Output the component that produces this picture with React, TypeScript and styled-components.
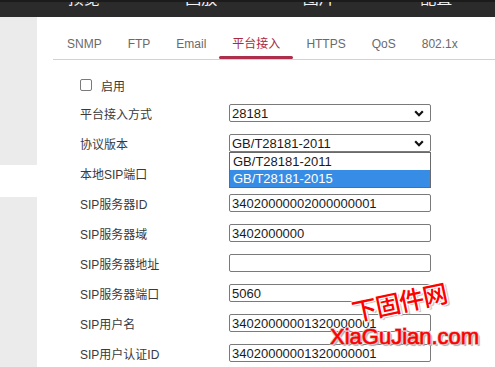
import React from "react";
import styled, { createGlobalStyle } from "styled-components";

const Global = createGlobalStyle`
  html, body { margin: 0; padding: 0; background: #fff; }
  body { width: 495px; height: 367px; overflow: hidden; font-family: "Liberation Sans", "Noto Sans CJK SC", sans-serif; }
`;

const Page = styled.div`
  position: relative;
  width: 495px;
  height: 367px;
  display: flex;
  flex-direction: column;
  overflow: hidden;
`;

const TopBar = styled.div`
  height: 15px;
  background: #2b2b2b;
  border-top: 2px solid #1b1b1b;
  display: flex;
  overflow: hidden;
  padding-left: 25px;
`;

const NavItem = styled.div`
  width: 120px;
  text-align: center;
  color: #f2f2f2;
  font-family: "Noto Sans CJK SC", sans-serif;
  font-size: 16px;
  line-height: 16px;
  margin-top: -13px;
`;

const Main = styled.div`
  flex: 1;
  display: flex;
`;

const Sidebar = styled.div`
  width: 37px;
  display: flex;
  flex-direction: column;
`;

const SideItem = styled.div<{ $active?: boolean; $h?: number }>`
  background: ${(p) => (p.$active ? "#ffffff" : "#ebebeb")};
  height: ${(p) => (p.$h ? `${p.$h}px` : "auto")};
  flex: ${(p) => (p.$h ? "none" : "1")};
`;

const Content = styled.div`
  flex: 1;
  padding-left: 16px;
  display: flex;
  flex-direction: column;
`;

const TabBar = styled.div`
  margin-top: 13px;
  display: flex;
  border-bottom: 1px solid #d2d2d2;
  padding-left: 1px;
`;

const Tab = styled.div<{ $active?: boolean }>`
  position: relative;
  height: 29px;
  line-height: 28px;
  padding: 0 13px;
  font-size: 12px;
  color: ${(p) => (p.$active ? "#a82a45" : "#6a6a6a")};
  &::after {
    content: "";
    display: ${(p) => (p.$active ? "block" : "none")};
    position: absolute;
    left: 0;
    right: 0;
    bottom: 0;
    height: 3px;
    border-radius: 2px;
    background: #ad2f4b;
  }
`;

const Form = styled.div`
  position: relative;
  padding: 17px 0 0 27px;
  display: flex;
  flex-direction: column;
  gap: 12px;
`;

const CheckRow = styled.div`
  height: 18px;
  display: flex;
  align-items: center;
  margin-bottom: -2px;
  margin-top: -1px;
  font-size: 12px;
  color: #3a3a3a;
`;

const CheckBox = styled.span`
  width: 10px;
  height: 10px;
  border: 1px solid #7a7a7a;
  border-radius: 2px;
  margin-right: 9px;
`;

const Row = styled.div`
  height: 18px;
  display: flex;
  align-items: center;
`;

const Label = styled.div`
  width: 149px;
  font-size: 12px;
  color: #3a3a3a;
`;

const Field = styled.input`
  width: 202px;
  height: 18px;
  box-sizing: border-box;
  border: 1px solid #7a7a7a;
  border-radius: 2px;
  padding: 0 2px;
  margin: 0;
  font-family: "Liberation Sans", sans-serif;
  font-size: 13px;
  color: #1a1a1a;
  background: #fff;
  outline: none;
`;

const SelectBox = styled.div`
  position: relative;
  width: 202px;
  height: 18px;
  box-sizing: border-box;
  border: 1px solid #7a7a7a;
  border-radius: 2px;
  padding: 0 2px;
  display: flex;
  align-items: center;
  justify-content: space-between;
  font-size: 13px;
  color: #1a1a1a;
`;

const Chevron = styled.svg`
  margin-right: 4px;
`;

const DropList = styled.div`
  position: absolute;
  left: -1px;
  top: 17px;
  width: 202px;
  box-sizing: border-box;
  border: 1px solid #6a6a6a;
  background: #fff;
  z-index: 2;
`;

const Option = styled.div<{ $selected?: boolean }>`
  height: 17px;
  line-height: 17px;
  padding-left: 3px;
  font-size: 13px;
  color: ${(p) => (p.$selected ? "#fff" : "#1a1a1a")};
  background: ${(p) => (p.$selected ? "#378de6" : "#fff")};
`;

const Watermark = styled.div`
  position: absolute;
  left: 326px;
  top: 282px;
  width: 165px;
  height: 72px;
  pointer-events: none;
  z-index: 3;
`;

const WmCn = styled.div`
  position: absolute;
  left: 25px;
  top: 5px;
  font-family: "Noto Sans CJK SC", sans-serif;
  font-size: 25px;
  line-height: 28px;
  font-weight: 500;
  color: #ff0000;
  white-space: nowrap;
  transform: rotate(-12deg);
  transform-origin: center;
  letter-spacing: -1px;
  text-shadow: 1px 1px 0 #fff, -1px -1px 0 #fff, 1px -1px 0 #fff, -1px 1px 0 #fff, 2px 2px 1px #bbb;
`;

const WmEn = styled.div`
  position: absolute;
  left: 4px;
  top: 44px;
  font-family: "Liberation Sans", sans-serif;
  font-size: 22px;
  line-height: 22px;
  white-space: nowrap;
  color: #ff0000;
  -webkit-text-stroke: 0.6px #ff0000;
  text-shadow: 1px 1px 0 #ccc, -1px -1px 0 #ddd, 1px -1px 0 #ddd, -1px 1px 0 #ccc, 2px 2px 1px #aaa;
`;

const ChevronIcon = () => (
  <Chevron width="10" height="7" viewBox="0 0 10 7">
    <path d="M1.2 1.3 L5 5.2 L8.8 1.3" fill="none" stroke="#111" strokeWidth="2.2" />
  </Chevron>
);

const navs = ["预览", "回放", "图片", "配置"];
const tabs = ["SNMP", "FTP", "Email", "平台接入", "HTTPS", "QoS", "802.1x"];

const fields: [string, string][] = [
  ["本地SIP端口", "5060"],
  ["SIP服务器ID", "34020000002000000001"],
  ["SIP服务器域", "3402000000"],
  ["SIP服务器地址", ""],
  ["SIP服务器端口", "5060"],
  ["SIP用户名", "34020000001320000001"],
  ["SIP用户认证ID", "34020000001320000001"],
];

export default function App() {
  return (
    <Page>
      <Global />
      <TopBar>
        {navs.map((n) => (
          <NavItem key={n}>{n}</NavItem>
        ))}
      </TopBar>
      <Main>
        <Sidebar>
          <SideItem $h={148} />
          <SideItem $active $h={32} />
          <SideItem />
        </Sidebar>
        <Content>
          <TabBar>
            {tabs.map((t) => (
              <Tab key={t} $active={t === "平台接入"}>
                {t}
              </Tab>
            ))}
          </TabBar>
          <Form>
            <CheckRow>
              <CheckBox />
              启用
            </CheckRow>
            <Row>
              <Label>平台接入方式</Label>
              <SelectBox>
                <span>28181</span>
                <ChevronIcon />
              </SelectBox>
            </Row>
            <Row>
              <Label>协议版本</Label>
              <SelectBox>
                <span>GB/T28181-2011</span>
                <ChevronIcon />
                <DropList>
                  <Option>GB/T28181-2011</Option>
                  <Option $selected>GB/T28181-2015</Option>
                </DropList>
              </SelectBox>
            </Row>
            {fields.map(([l, v]) => (
              <Row key={l}>
                <Label>{l}</Label>
                <Field defaultValue={v} readOnly />
              </Row>
            ))}
          </Form>
        </Content>
      </Main>
      <Watermark>
        <WmCn>下固件网</WmCn>
        <WmEn>XiaGuJian.com</WmEn>
      </Watermark>
    </Page>
  );
}
